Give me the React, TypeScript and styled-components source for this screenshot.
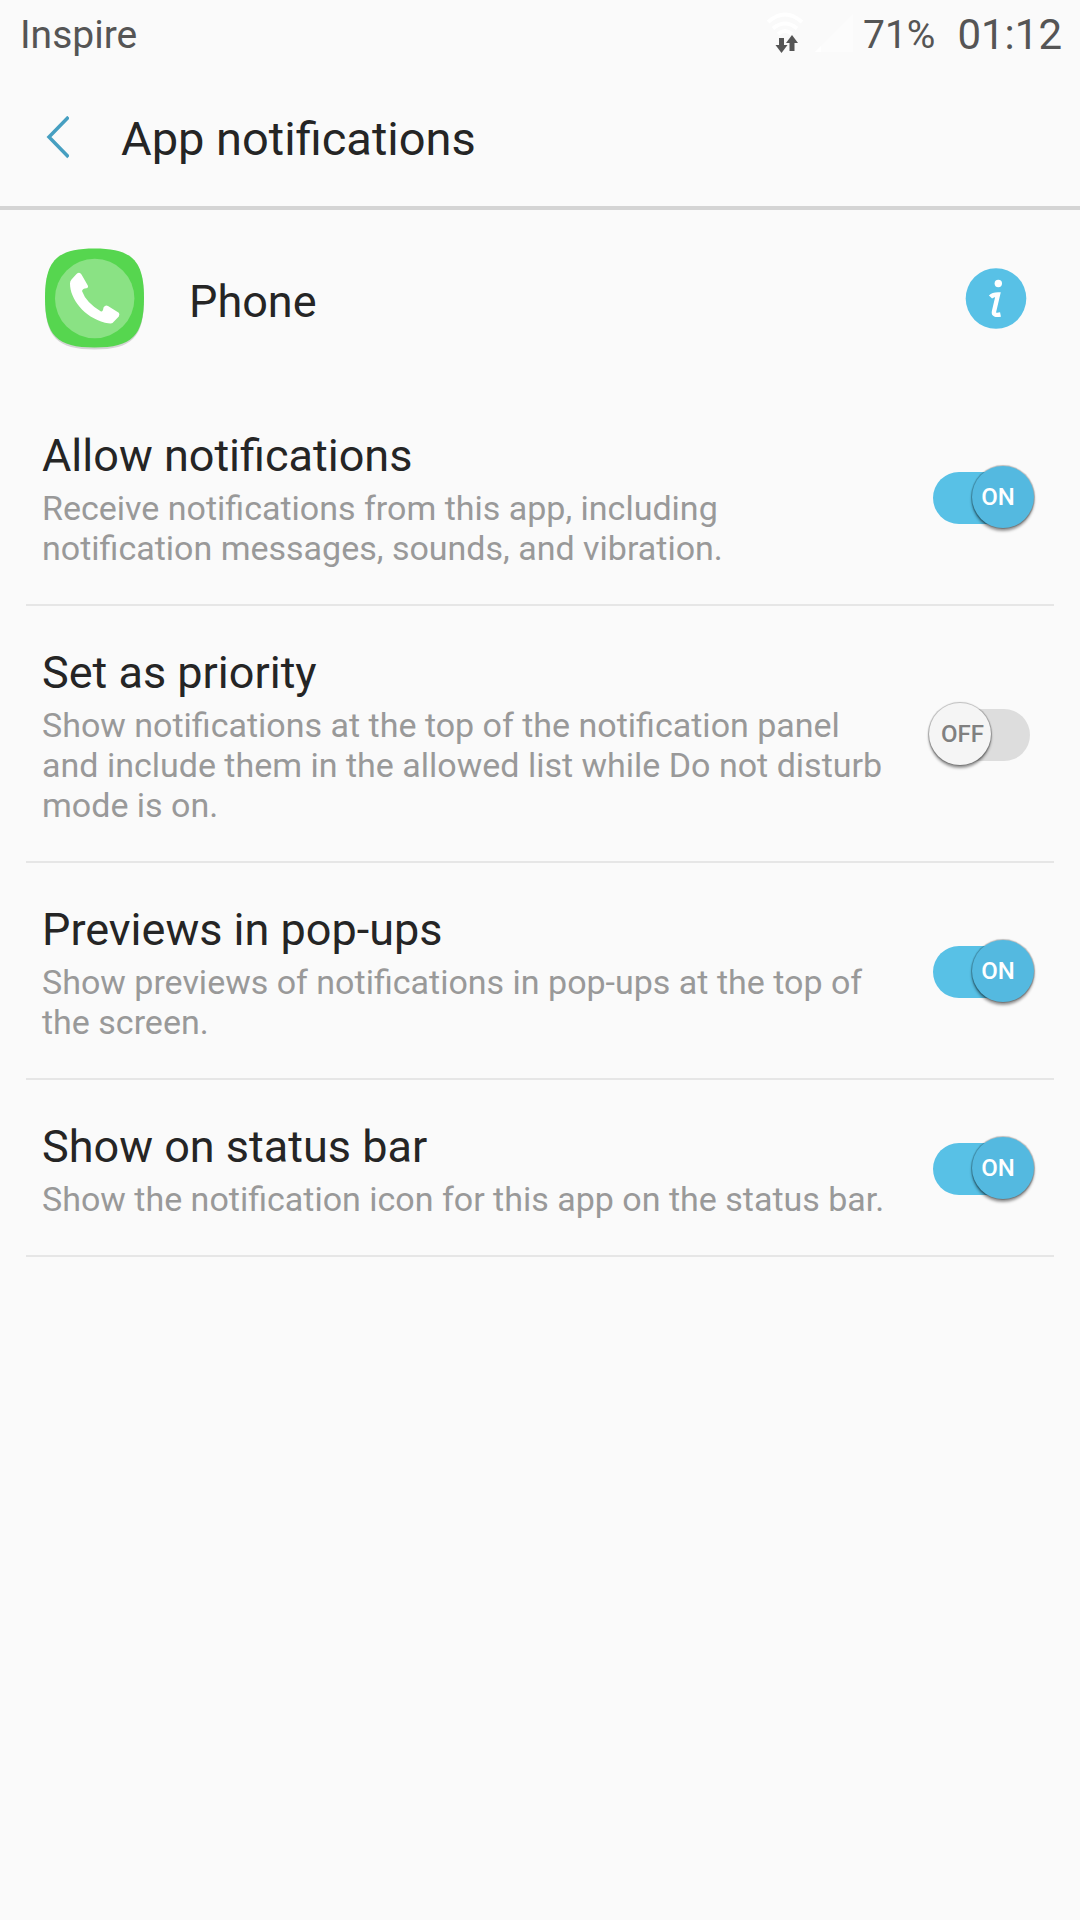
import React, { useId, useState } from "react";
import styled, { createGlobalStyle } from "styled-components";

const GlobalStyle = createGlobalStyle`
  *, *::before, *::after { box-sizing: border-box; }
  html { background: #fafafa; }
  body {
    margin: 0;
    background: #fafafa;
    color: #252525;
    font-family: Roboto, "Noto Sans", sans-serif;
  }
  h1, h2, p { margin: 0; font-weight: 400; }
  svg { display: block; flex: none; }
`;

const Screen = styled.div`
  display: flex;
  flex-direction: column;
  min-height: 100vh;
`;

const StatusBar = styled.div`
  display: flex;
  align-items: center;
  justify-content: space-between;
  height: 70px;
  padding: 0 18px 0 20px;
  color: #555555;
`;

const Carrier = styled.span`
  font-size: 39px;
  line-height: 48px;
`;

const StatusItems = styled.div`
  display: flex;
  align-items: center;
`;

const SignalIcons = styled.div`
  display: flex;
  align-items: center;
  gap: 10px;
  margin-right: 10px;
`;

const Battery = styled.span`
  font-size: 39px;
  line-height: 48px;
  margin-right: 22px;
`;

const Clock = styled.time`
  font-size: 42px;
  line-height: 48px;
`;

const Header = styled.header`
  display: flex;
  align-items: center;
  gap: 52px;
  height: 140px;
  padding: 0 45px;
  border-bottom: 4px solid #d4d4d4;
`;

const BackButton = styled.button`
  display: flex;
  padding: 0;
  border: 0;
  background: none;
  cursor: pointer;
`;

const ScreenTitle = styled.h1`
  padding-top: 2px;
  font-size: 47px;
  line-height: 56px;
`;

const AppRow = styled.section`
  display: flex;
  align-items: center;
  gap: 42px;
  padding: 35px 53px 38px 43px;
`;

const AppName = styled.h2`
  flex: 1;
  padding-top: 8px;
  font-size: 45px;
  line-height: 56px;
`;

const InfoButton = styled(BackButton)`
  border-radius: 50%;
`;

const SettingsList = styled.main`
  display: flex;
  flex-direction: column;
  padding: 0 26px;
`;

const SettingRow = styled.label`
  display: flex;
  align-items: center;
  gap: 47px;
  padding: 38px 24px 36px 16px;
  border-bottom: 2px solid #e6e6e6;
  cursor: pointer;
`;

const SettingText = styled.div`
  flex: 1;
`;

const SettingTitle = styled.h2`
  padding-top: 1px;
  font-size: 45px;
  line-height: 56px;
  margin-bottom: 4px;
`;

const SettingDescription = styled.p`
  font-size: 34px;
  line-height: 40px;
  color: #999999;
`;

const Switch = styled.span<{ $on: boolean }>`
  position: relative;
  flex: none;
  width: 97px;
  height: 52px;
  border-radius: 26px;
  background: ${(p) => (p.$on ? "#58c1e6" : "#dddddd")};
`;

const SwitchInput = styled.input`
  position: absolute;
  inset: 0;
  width: 100%;
  height: 100%;
  margin: 0;
  appearance: none;
  cursor: pointer;
`;

const Thumb = styled.span<{ $on: boolean }>`
  position: absolute;
  top: -6px;
  ${(p) => (p.$on ? "right: -4px;" : "left: -4px;")}
  display: flex;
  align-items: center;
  justify-content: center;
  width: 62px;
  height: 62px;
  padding: ${(p) => (p.$on ? "0 10px 0 0" : "0 0 0 5px")};
  border-radius: 50%;
  background: ${(p) => (p.$on ? "#54b9e0" : "#f5f5f5")};
  box-shadow: 0 0 1px 1px rgba(0, 0, 0, 0.25), 0 3px 3px rgba(0, 0, 0, 0.4);
  color: ${(p) => (p.$on ? "#ffffff" : "#808080")};
  font-size: 24px;
  font-weight: 500;
  line-height: 28px;
  pointer-events: none;
`;

const WifiIcon = () => (
  <svg width="40" height="48" viewBox="0 0 40 48" aria-hidden="true">
    <g fill="none" stroke="#ffffff" strokeWidth="4">
      <path d="M3 11Q20 -4 37 11" />
      <path d="M8 17.500Q20 7.500 32 17.500" />
      <path d="M13 23Q20 17 27 23" />
    </g>
    <g fill="#555555">
      <path d="M14 27h5v7h3.500l-6 8-6-8H14z" />
      <path d="M24.500 40h5v-8h3.500l-6-8-6 8h3.500z" />
    </g>
  </svg>
);

const SignalIcon = () => (
  <svg width="38" height="42" viewBox="0 0 38 42" aria-hidden="true">
    <path d="M38 0V38H0z" fill="#fcfcfc" />
    <path d="M6 32V38H0z" fill="#ffffff" />
  </svg>
);

const BackIcon = () => (
  <svg width="24" height="44" viewBox="0 0 24 44" aria-hidden="true">
    <path d="M23.500 1L4 21L23.500 41" fill="none" stroke="#469fc1" strokeWidth="3.500" />
  </svg>
);

const PhoneIcon = () => (
  <svg width="104" height="106" viewBox="0 0 104 106" aria-hidden="true">
    <path
      d="M51.500 5C89 5 101 16 101 54S89 104.500 51.500 104.500S2 92 2 54S14 5 51.500 5Z"
      fill="#000000"
      opacity="0.15"
    />
    <path
      d="M51.500 3.500C89 3.500 101 15.500 101 53S89 102.500 51.500 102.500S2 90.500 2 53S14 3.500 51.500 3.500Z"
      fill="#56d64f"
    />
    <circle cx="51.700" cy="53.500" r="39.700" fill="#8ae284" />
    <path
      d="M33.500 29Q36.500 26.500 38.500 29.500L44.800 40.500Q45.800 42.500 43.500 43.200Q39.500 43.500 39 46Q43 57.500 58 66.500Q60 67 60.500 62.500Q62.500 59.500 65 61L75.800 67.800Q77 69 75.800 71.500L69.500 78Q68.500 79 62 77.800C41 72 27 54 27 38.500Q27 36 28.500 34.500Z"
      fill="#ffffff"
    />
  </svg>
);

const InfoIcon = () => (
  <svg width="62" height="62" viewBox="0 0 62 62" aria-hidden="true">
    <circle cx="31" cy="31.500" r="30.300" fill="#58c1e6" />
    <circle cx="33.300" cy="16.500" r="3.700" fill="#ffffff" />
    <path
      d="M25.500 30Q28 27.500 33 27.500L29 44.500Q28 49 35.500 47.500"
      fill="none"
      stroke="#ffffff"
      strokeWidth="4.400"
    />
  </svg>
);

interface SettingProps {
  title: string;
  description: string;
  initial: boolean;
}

const Setting = ({ title, description, initial }: SettingProps) => {
  const [on, setOn] = useState(initial);
  const id = useId();
  return (
    <SettingRow htmlFor={id}>
      <SettingText>
        <SettingTitle>{title}</SettingTitle>
        <SettingDescription>{description}</SettingDescription>
      </SettingText>
      <Switch $on={on}>
        <SwitchInput
          id={id}
          type="checkbox"
          role="switch"
          checked={on}
          onChange={(e) => setOn(e.target.checked)}
        />
        <Thumb $on={on} aria-hidden="true">
          {on ? "ON" : "OFF"}
        </Thumb>
      </Switch>
    </SettingRow>
  );
};

const settings: SettingProps[] = [
  {
    title: "Allow notifications",
    description:
      "Receive notifications from this app, including notification messages, sounds, and vibration.",
    initial: true,
  },
  {
    title: "Set as priority",
    description:
      "Show notifications at the top of the notification panel and include them in the allowed list while Do not disturb mode is on.",
    initial: false,
  },
  {
    title: "Previews in pop-ups",
    description: "Show previews of notifications in pop-ups at the top of the screen.",
    initial: true,
  },
  {
    title: "Show on status bar",
    description: "Show the notification icon for this app on the status bar.",
    initial: true,
  },
];

export default function App() {
  return (
    <Screen>
      <GlobalStyle />
      <StatusBar>
        <Carrier>Inspire</Carrier>
        <StatusItems>
          <SignalIcons>
            <WifiIcon />
            <SignalIcon />
          </SignalIcons>
          <Battery>71%</Battery>
          <Clock>01:12</Clock>
        </StatusItems>
      </StatusBar>
      <Header>
        <BackButton type="button" aria-label="Back">
          <BackIcon />
        </BackButton>
        <ScreenTitle>App notifications</ScreenTitle>
      </Header>
      <AppRow>
        <PhoneIcon />
        <AppName>Phone</AppName>
        <InfoButton type="button" aria-label="App info">
          <InfoIcon />
        </InfoButton>
      </AppRow>
      <SettingsList>
        {settings.map((s) => (
          <Setting key={s.title} {...s} />
        ))}
      </SettingsList>
    </Screen>
  );
}
